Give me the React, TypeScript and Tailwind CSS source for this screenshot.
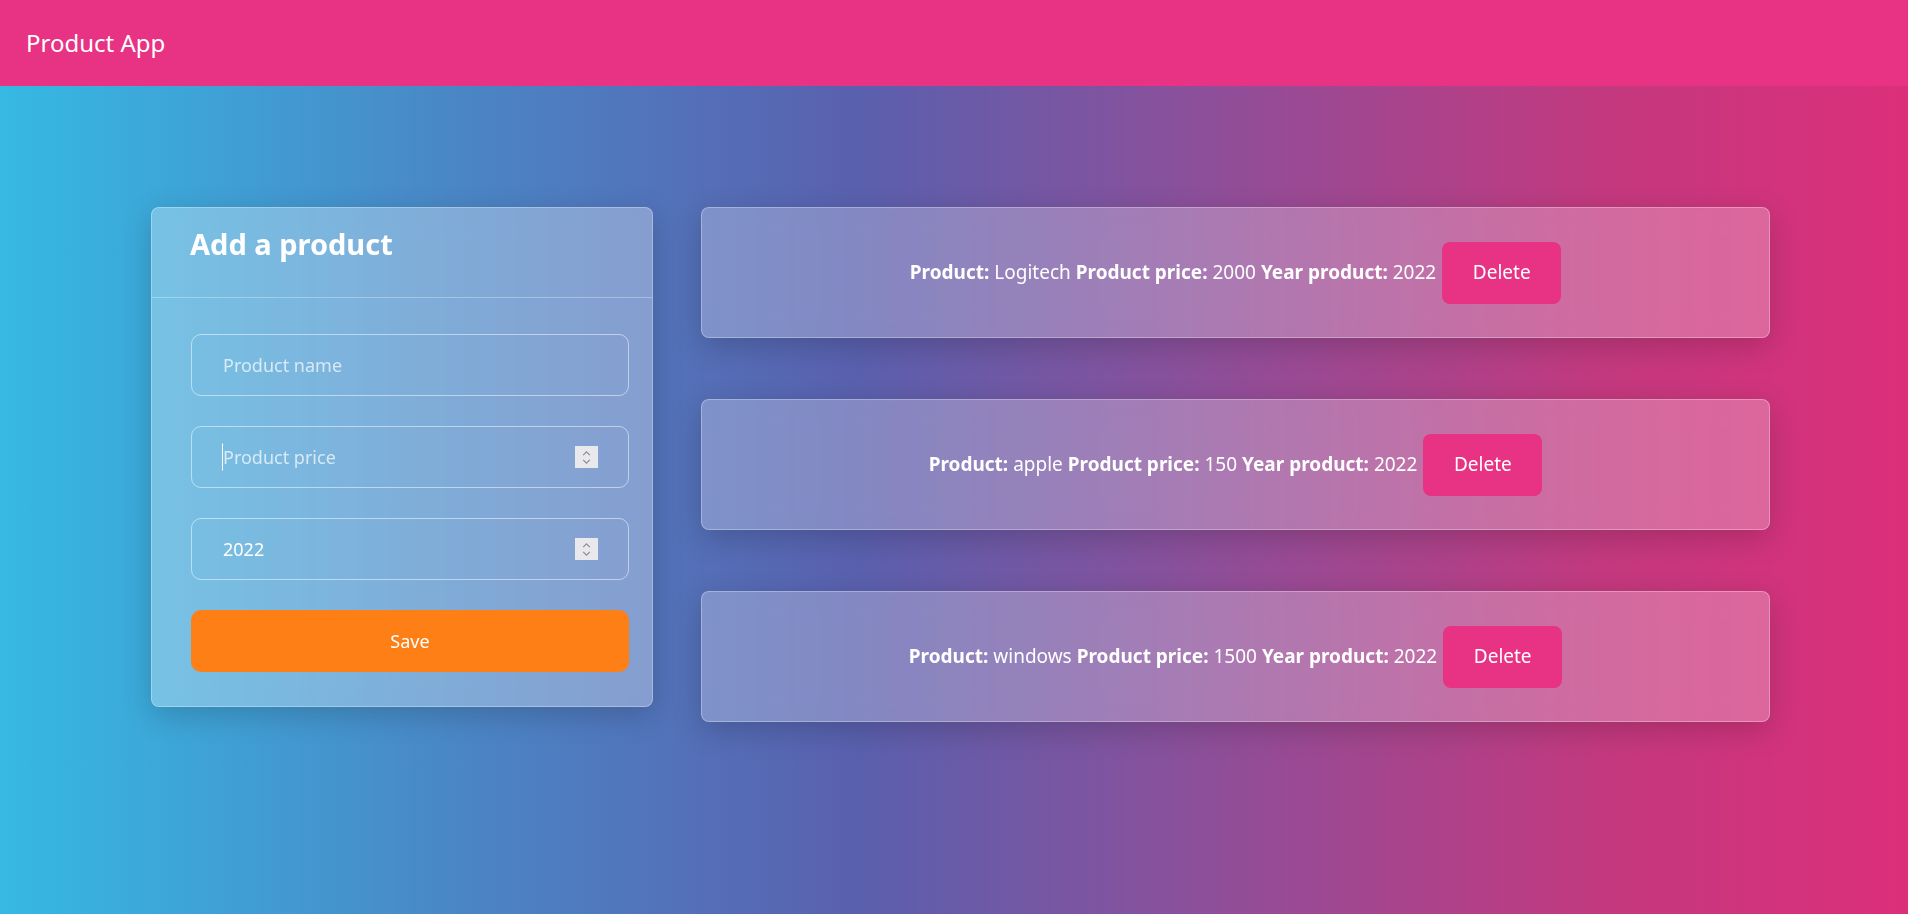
import { useState } from "react";

type Product = { name: string; price: number; year: number };

const INITIAL: Product[] = [
  { name: "Logitech", price: 2000, year: 2022 },
  { name: "apple", price: 150, year: 2022 },
  { name: "windows", price: 1500, year: 2022 },
];

function Spinner() {
  return (
    <div className="absolute right-[31px] top-1/2 -translate-y-1/2 flex h-[22px] w-[23px] flex-col items-center justify-center bg-[#e9e9ed]">
      <svg viewBox="0 0 10 6" className="h-[5px] w-[9px]" fill="none" stroke="#8a8a92" strokeWidth="1.4">
        <path d="M1 5 L5 1 L9 5" />
      </svg>
      <svg viewBox="0 0 10 6" className="mt-[3px] h-[5px] w-[9px]" fill="none" stroke="#8a8a92" strokeWidth="1.4">
        <path d="M1 1 L5 5 L9 1" />
      </svg>
    </div>
  );
}

export default function App() {
  const [products, setProducts] = useState<Product[]>(INITIAL);

  return (
    <div className="min-h-screen font-['Noto_Sans',sans-serif] text-white">
      <header className="flex h-[86px] items-center bg-[#e83283] px-[26px]">
        <h1 className="text-[24px] font-normal">Product App</h1>
      </header>

      <main className="min-h-[828px] bg-[linear-gradient(to_right,#35b9e3_0%,#4a86c6_24%,#5a60ae_45%,#8d4f9a_63%,#c3397f_84%,#dc2f7a_100%)] pb-20 pl-[151px] pt-[121px]">
        <div className="flex items-start gap-[48px]">
          {/* Form card */}
          <div className="w-[502px] rounded-lg border border-white/30 bg-white/30 shadow-[0_8px_30px_rgba(0,0,0,0.18)] backdrop-blur-md">
            <div className="h-[90px] border-b border-white/30 pl-[38px] pt-[15px]">
              <h2 className="text-[29px] font-bold leading-[42px]">Add a product</h2>
            </div>
            <div className="flex flex-col gap-[30px] pb-[34px] pl-[39px] pr-[23px] pt-[36px]">
              <div className="relative">
                <input
                  placeholder="Product name"
                  className="h-[62px] w-full rounded-[10px] border border-white/50 bg-transparent px-[31px] text-[18px] text-white outline-none placeholder:text-white/70"
                />
              </div>
              <div className="relative">
                <input
                  placeholder="Product price"
                  className="h-[62px] w-full rounded-[10px] border border-white/50 bg-transparent px-[31px] text-[18px] text-white outline-none placeholder:text-white/70"
                />
                <span className="absolute left-[31px] top-1/2 h-[27px] w-px -translate-y-1/2 bg-white" />
                <Spinner />
              </div>
              <div className="relative">
                <input
                  defaultValue="2022"
                  className="h-[62px] w-full rounded-[10px] border border-white/50 bg-transparent px-[31px] text-[18px] text-white outline-none"
                />
                <Spinner />
              </div>
              <button className="h-[62px] w-full rounded-[10px] bg-[#fd7f16] text-[18px] text-white">Save</button>
            </div>
          </div>

          {/* Product list */}
          <div className="flex w-[1069px] flex-col gap-[61px]">
            {products.map((p, i) => (
              <div
                key={p.name}
                className="flex h-[131px] items-center justify-center rounded-lg border border-white/30 bg-white/25 shadow-[0_8px_30px_rgba(0,0,0,0.18)] backdrop-blur-md"
              >
                <p className="text-[19px]">
                  <strong>Product:</strong> {p.name} <strong>Product price:</strong> {p.price}{" "}
                  <strong>Year product:</strong> {p.year}
                </p>
                <button
                  onClick={() => setProducts(products.filter((_, j) => j !== i))}
                  className="ml-[6px] h-[62px] w-[119px] rounded-lg bg-[#e83283] text-[19px] text-white"
                >
                  Delete
                </button>
              </div>
            ))}
          </div>
        </div>
      </main>
    </div>
  );
}
